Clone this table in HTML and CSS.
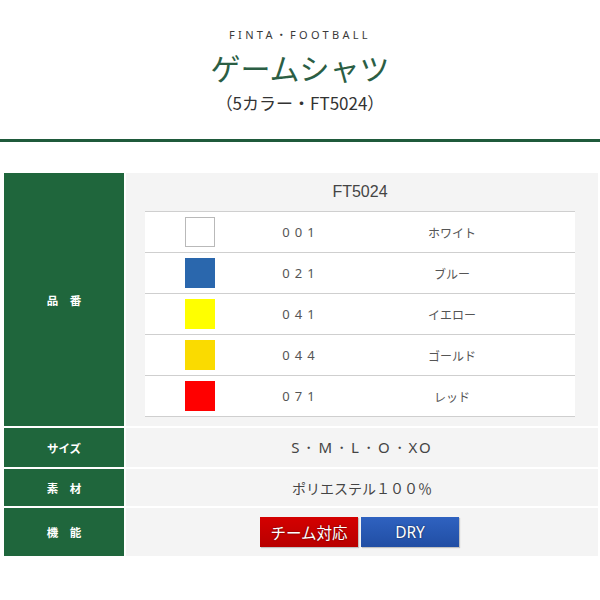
FILE: index.html
```html
<!DOCTYPE html>
<html lang="ja">
<head>
<meta charset="utf-8">
<link rel="stylesheet" href="styles.css">
</head>
<body>
<header class="head">
  <p class="brand">FINTA・FOOTBALL</p>
  <h1 class="title">ゲームシャツ</h1>
  <p class="sub">（5カラー・FT5024）</p>
</header>
<div class="spec">
  <div class="th th-tall">品　番</div>
  <div class="td td-tall">
    <div class="model">FT5024</div>
    <div class="colors">
      <div class="crow"><span class="sw sw-white"></span><span class="code">001</span><span class="name">ホワイト</span></div>
      <div class="crow"><span class="sw sw-blue"></span><span class="code">021</span><span class="name">ブルー</span></div>
      <div class="crow"><span class="sw sw-yellow"></span><span class="code">041</span><span class="name">イエロー</span></div>
      <div class="crow"><span class="sw sw-gold"></span><span class="code">044</span><span class="name">ゴールド</span></div>
      <div class="crow"><span class="sw sw-red"></span><span class="code">071</span><span class="name">レッド</span></div>
    </div>
  </div>
  <div class="th th-size">サイズ</div>
  <div class="td td-size"><span class="sizes">S・M・L・O・XO</span></div>
  <div class="th th-mat">素　材</div>
  <div class="td td-mat">ポリエステル１００％</div>
  <div class="th th-func">機　能</div>
  <div class="td td-func">
    <span class="badge badge-red">チーム対応</span>
    <span class="badge badge-blue">DRY</span>
  </div>
</div>
</body>
</html>
```
FILE: styles.css
```css
* { box-sizing: border-box; }
html, body { margin: 0; padding: 0; background: #fff; }
body {
  font-family: "Noto Sans CJK JP", "Noto Sans", sans-serif;
  color: #444;
}
.head {
  text-align: center;
  padding-top: 27px;
  height: 142px;
  border-bottom: 3px solid #1f5a3b;
}
.brand {
  margin: 0;
  font-family: "Noto Sans", "Noto Sans CJK JP", sans-serif;
  font-size: 11px;
  line-height: 16px;
  letter-spacing: 3.3px;
  color: #3a3a3a;
}
.title {
  margin: 6px 0 0;
  font-size: 30px;
  line-height: 36px;
  font-weight: 400;
  color: #2b5e44;
}
.sub {
  margin: 6px 0 0;
  font-size: 17px;
  line-height: 24px;
  color: #333;
}
.spec {
  margin: 31px 2px 0 4px;
  display: grid;
  grid-template-columns: 120px 1fr;
  grid-template-rows: 253px 39px 37px 48px;
  column-gap: 2px;
  row-gap: 2px;
}
.th {
  background: #1f663c;
  color: #fff;
  font-weight: 700;
  font-size: 11.5px;
  display: flex;
  align-items: center;
  justify-content: center;
}
.td {
  background: #f4f4f4;
  display: flex;
  align-items: center;
  justify-content: center;
  color: #444;
}
.td-tall {
  flex-direction: column;
  justify-content: flex-start;
  align-items: stretch;
  padding: 9px 23px 0 19px;
}
.model {
  text-align: center;
  font-family: "Liberation Sans", sans-serif;
  font-size: 16px;
  line-height: 20px;
  height: 29px;
  color: #444;
}
.colors {
  background: #fff;
  border-top: 1px solid #cfcfcf;
  width: 430px;
}
.crow {
  display: grid;
  grid-template-columns: 110px 90px 1fr;
  align-items: center;
  height: 41px;
  border-bottom: 1px solid #cfcfcf;
}
.sw {
  justify-self: center;
  width: 30px;
  height: 30px;
}
.sw-white { background: #fff; border: 1px solid #b9b9b9; }
.sw-blue { background: #2a67ad; }
.sw-yellow { background: #ffff00; }
.sw-gold { background: #fadb00; }
.sw-red { background: #ff0000; }
.code {
  text-align: center;
  font-family: "Noto Sans", sans-serif;
  font-size: 13px;
  letter-spacing: 5px;
  padding-left: 2px;
  color: #555;
}
.name {
  text-align: center;
  font-size: 12px;
  color: #555;
  padding-right: 16px;
}
.sizes {
  font-family: "Noto Sans", sans-serif;
  font-size: 15px;
  letter-spacing: 2px;
  color: #444;
}
.td-mat {
  font-size: 14px;
  color: #444;
}
.td-func {
  gap: 3px;
  padding-right: 5px;
}
.badge {
  width: 98px;
  height: 30px;
  display: flex;
  align-items: center;
  justify-content: center;
  color: #fff;
  font-size: 15.5px;
  text-shadow: 0 0 2px rgba(0,0,0,0.6);
  box-shadow: 1px 1px 1px rgba(0,0,0,0.2);
}
.badge-red { background: linear-gradient(#d40000, #b80000); }
.badge-blue { background: linear-gradient(#2f62c0, #214ea4); font-family: "Noto Sans", sans-serif; }
```
